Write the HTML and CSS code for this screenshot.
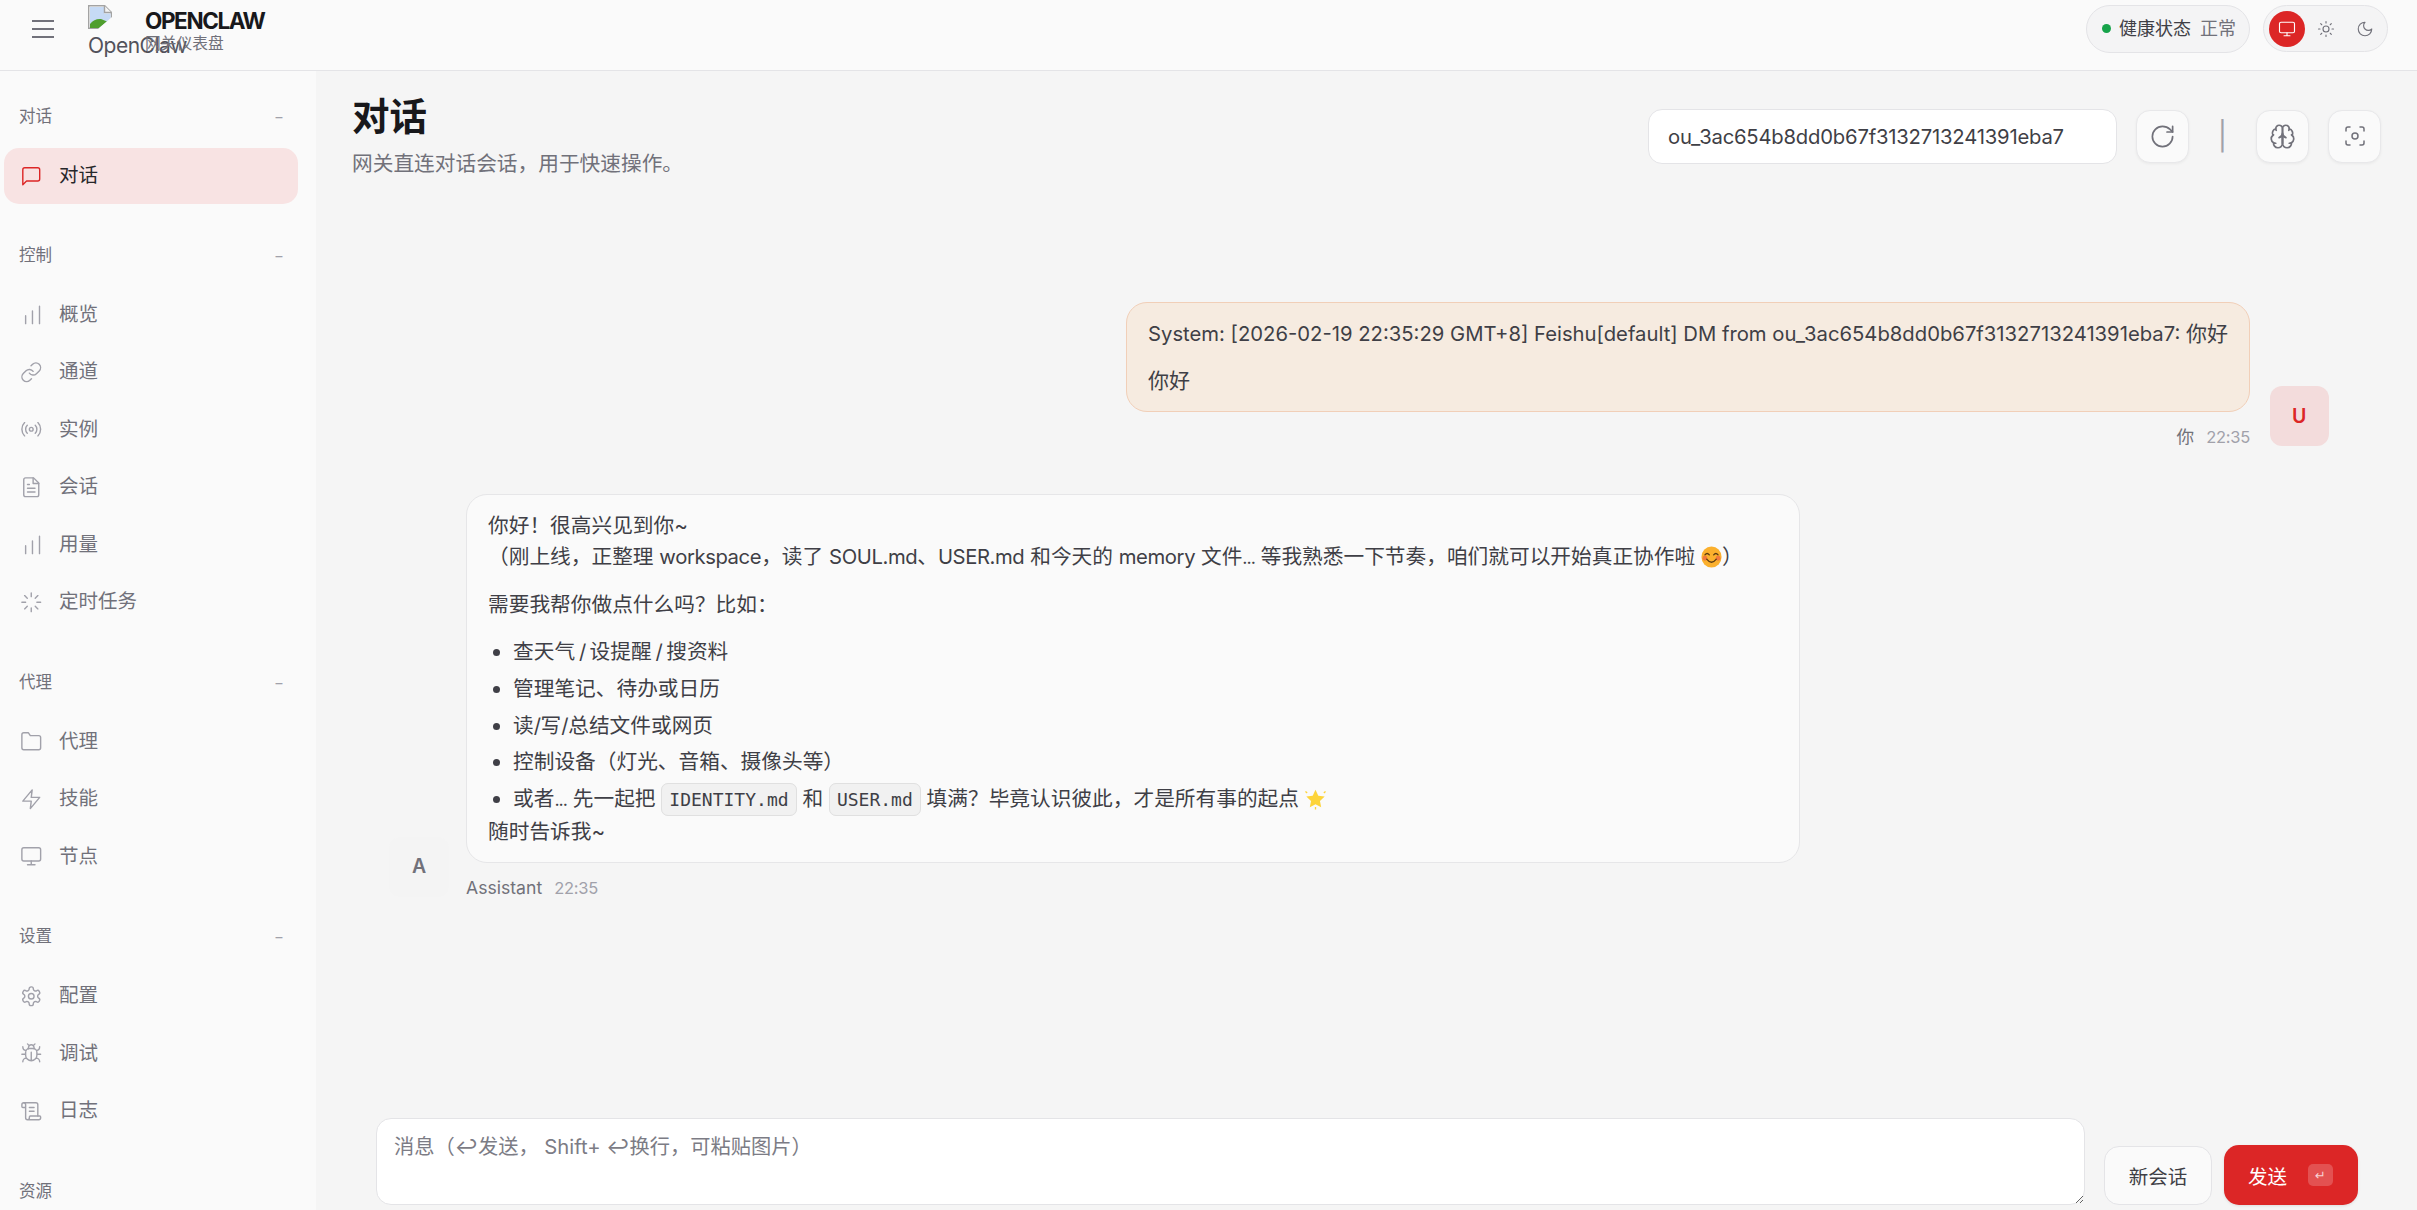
FILE: index.html
```html
<!DOCTYPE html>
<html lang="zh-CN">
<head>
<meta charset="utf-8">
<title>OpenClaw</title>
<link rel="stylesheet" href="styles.css">
</head>
<body>
<svg class="defs" width="0" height="0" aria-hidden="true">
  <symbol id="i-msg" viewBox="0 0 24 24"><path d="M21 15a2 2 0 0 1-2 2H7l-4 4V5a2 2 0 0 1 2-2h14a2 2 0 0 1 2 2z"/></symbol>
  <symbol id="i-bars" viewBox="0 0 24 24"><path d="M20.800 22V3.500M13.300 22V8.500M6 22v-8.500"/></symbol>
  <symbol id="i-link" viewBox="0 0 24 24"><path d="M10 13a5 5 0 0 0 7.54.54l3-3a5 5 0 0 0-7.07-7.07l-1.72 1.71"/><path d="M14 11a5 5 0 0 0-7.54-.54l-3 3a5 5 0 0 0 7.07 7.07l1.71-1.71"/></symbol>
  <symbol id="i-radio" viewBox="0 0 24 24"><circle cx="12" cy="12" r="2"/><path d="M16.24 7.76a6 6 0 0 1 0 8.49M7.76 16.24a6 6 0 0 1 0-8.49M19.07 4.93a10 10 0 0 1 0 14.14M4.93 19.07a10 10 0 0 1 0-14.14"/></symbol>
  <symbol id="i-file" viewBox="0 0 24 24"><path d="M14.5 2H6a2 2 0 0 0-2 2v16a2 2 0 0 0 2 2h12a2 2 0 0 0 2-2V7.5L14.5 2z"/><path d="M14 2v6h6M16 13H8M16 17H8M10 9H8"/></symbol>
  <symbol id="i-loader" viewBox="0 0 24 24"><path d="M12 2v4M12 18v4M4.93 4.93l2.83 2.83M16.24 16.24l2.83 2.83M2 12h4M18 12h4M4.93 19.07l2.83-2.83M16.24 7.76l2.83-2.83"/></symbol>
  <symbol id="i-folder" viewBox="0 0 24 24"><path d="M22 19a2 2 0 0 1-2 2H4a2 2 0 0 1-2-2V5a2 2 0 0 1 2-2h5l2 3h9a2 2 0 0 1 2 2z"/></symbol>
  <symbol id="i-zap" viewBox="0 0 24 24"><path d="M13 2 3 14h9l-1 8 10-12h-9l1-8z"/></symbol>
  <symbol id="i-monitor" viewBox="0 0 24 24"><rect x="2" y="3" width="20" height="14" rx="2"/><path d="M8 21h8M12 17v4"/></symbol>
  <symbol id="i-gear" viewBox="0 0 24 24"><path d="M12.22 2h-.44a2 2 0 0 0-2 2v.18a2 2 0 0 1-1 1.73l-.43.25a2 2 0 0 1-2 0l-.15-.08a2 2 0 0 0-2.73.73l-.22.38a2 2 0 0 0 .73 2.73l.15.1a2 2 0 0 1 1 1.72v.51a2 2 0 0 1-1 1.74l-.15.09a2 2 0 0 0-.73 2.73l.22.38a2 2 0 0 0 2.73.73l.15-.08a2 2 0 0 1 2 0l.43.25a2 2 0 0 1 1 1.73V20a2 2 0 0 0 2 2h.44a2 2 0 0 0 2-2v-.18a2 2 0 0 1 1-1.73l.43-.25a2 2 0 0 1 2 0l.15.08a2 2 0 0 0 2.73-.73l.22-.39a2 2 0 0 0-.73-2.73l-.15-.08a2 2 0 0 1-1-1.74v-.5a2 2 0 0 1 1-1.74l.15-.09a2 2 0 0 0 .73-2.73l-.22-.38a2 2 0 0 0-2.73-.73l-.15.08a2 2 0 0 1-2 0l-.43-.25a2 2 0 0 1-1-1.73V4a2 2 0 0 0-2-2z"/><circle cx="12" cy="12" r="3"/></symbol>
  <symbol id="i-bug" viewBox="0 0 24 24"><path d="m8 2 1.88 1.88M14.12 3.88 16 2M9 7.13v-1a3.003 3.003 0 1 1 6 0v1"/><path d="M12 20c-3.3 0-6-2.7-6-6v-3a4 4 0 0 1 4-4h4a4 4 0 0 1 4 4v3c0 3.3-2.7 6-6 6M12 20v-9M6.53 9C4.6 8.8 3 7.1 3 5M6 13H2M3 21c0-2.1 1.7-3.9 3.8-4M20.97 5c0 2.1-1.6 3.8-3.5 4M22 13h-4M17.2 17c2.1.1 3.8 1.9 3.8 4"/></symbol>
  <symbol id="i-scroll" viewBox="0 0 24 24"><path d="M15 12h-5M15 8h-5M19 17V5a2 2 0 0 0-2-2H4"/><path d="M8 21h12a2 2 0 0 0 2-2v-1a1 1 0 0 0-1-1H11a1 1 0 0 0-1 1v1a2 2 0 1 1-4 0V5a2 2 0 1 0-4 0v2a1 1 0 0 0 1 1h3"/></symbol>
  <symbol id="i-rotate" viewBox="0 0 24 24"><path d="M21 12a9 9 0 1 1-9-9c2.52 0 4.93 1 6.74 2.74L21 8"/><path d="M21 3v5h-5"/></symbol>
  <symbol id="i-brain" viewBox="0 0 24 24"><path d="M12 5a3 3 0 1 0-5.997.125 4 4 0 0 0-2.526 5.77 4 4 0 0 0 .556 6.588A4 4 0 1 0 12 18Z"/><path d="M12 5a3 3 0 1 1 5.997.125 4 4 0 0 1 2.526 5.77 4 4 0 0 1-.556 6.588A4 4 0 1 1 12 18Z"/><path d="M15 13a4.5 4.5 0 0 1-3-4 4.5 4.5 0 0 1-3 4M12 18V9M17.599 6.5a3 3 0 0 0 .399-1.375M6.003 5.125A3 3 0 0 0 6.401 6.5M3.477 10.896a4 4 0 0 1 .585-.396M19.938 10.5a4 4 0 0 1 .585.396M6 18a4 4 0 0 1-1.967-.516M19.967 17.484A4 4 0 0 1 18 18"/></symbol>
  <symbol id="i-scan" viewBox="0 0 24 24"><path d="M3 7V5a2 2 0 0 1 2-2h2M17 3h2a2 2 0 0 1 2 2v2M21 17v2a2 2 0 0 1-2 2h-2M7 21H5a2 2 0 0 1-2-2v-2"/><circle cx="12" cy="12" r="3"/></symbol>
  <symbol id="i-sun" viewBox="0 0 24 24"><circle cx="12" cy="12" r="4"/><path d="M12 2v2M12 20v2M4.93 4.93l1.41 1.41M17.66 17.66l1.41 1.41M2 12h2M20 12h2M6.34 17.66l-1.41 1.41M19.07 4.93l-1.41 1.41"/></symbol>
  <symbol id="i-moon" viewBox="0 0 24 24"><path d="M12 3a6 6 0 0 0 9 9 9 9 0 1 1-9-9Z"/></symbol>
</svg>

<header class="topbar">
  <button class="menu-btn" type="button" aria-label="menu">
    <svg class="menu-icon" viewBox="0 0 22 18"><path d="M0 1h22M0 9h22M0 17h22"/></svg>
  </button>
  <div class="logo">
    <svg class="broken" viewBox="0 0 24 24">
      <path d="M.7.7h16l6.600 6.600v16H.7z" fill="#fff" stroke="#a3a3a3" stroke-width="1.400"/>
      <path d="M2 2h14v6.500h6.500V22H2z" fill="#c6daf5"/>
      <path d="M2 23v-4c3-4 7-5.500 11-5l6 2.500-8 6.500z" fill="#4f9e2e"/>
      <path d="M10 24 24 12v12z" fill="#fafafa"/>
      <path d="M16.500.7v6.800h6.800" fill="#f4f4f4" stroke="#a3a3a3" stroke-width="1.400"/>
    </svg>
    <span class="logo-alt">OpenClaw</span>
  </div>
  <div class="brand">
    <div class="brand-title">OPENCLAW</div>
    <div class="brand-sub">网关仪表盘</div>
  </div>
  <div class="top-right">
    <div class="health">
      <span class="health-dot"></span>
      <span class="health-label">健康状态</span>
      <span class="health-value">正常</span>
    </div>
    <div class="theme">
      <span class="theme-opt theme-on"><svg class="ico"><use href="#i-monitor"/></svg></span>
      <span class="theme-opt"><svg class="ico"><use href="#i-sun"/></svg></span>
      <span class="theme-opt"><svg class="ico"><use href="#i-moon"/></svg></span>
    </div>
  </div>
</header>

<div class="shell">
  <nav class="sidebar">
    <section class="group">
      <div class="group-label"><span>对话</span><span class="minus">−</span></div>
      <a class="item item-on"><svg class="ico"><use href="#i-msg"/></svg><span>对话</span></a>
    </section>
    <section class="group">
      <div class="group-label"><span>控制</span><span class="minus">−</span></div>
      <a class="item"><svg class="ico"><use href="#i-bars"/></svg><span>概览</span></a>
      <a class="item"><svg class="ico"><use href="#i-link"/></svg><span>通道</span></a>
      <a class="item"><svg class="ico"><use href="#i-radio"/></svg><span>实例</span></a>
      <a class="item"><svg class="ico"><use href="#i-file"/></svg><span>会话</span></a>
      <a class="item"><svg class="ico"><use href="#i-bars"/></svg><span>用量</span></a>
      <a class="item"><svg class="ico"><use href="#i-loader"/></svg><span>定时任务</span></a>
    </section>
    <section class="group">
      <div class="group-label"><span>代理</span><span class="minus">−</span></div>
      <a class="item"><svg class="ico"><use href="#i-folder"/></svg><span>代理</span></a>
      <a class="item"><svg class="ico"><use href="#i-zap"/></svg><span>技能</span></a>
      <a class="item"><svg class="ico"><use href="#i-monitor"/></svg><span>节点</span></a>
    </section>
    <section class="group">
      <div class="group-label"><span>设置</span><span class="minus">−</span></div>
      <a class="item"><svg class="ico"><use href="#i-gear"/></svg><span>配置</span></a>
      <a class="item"><svg class="ico"><use href="#i-bug"/></svg><span>调试</span></a>
      <a class="item"><svg class="ico"><use href="#i-scroll"/></svg><span>日志</span></a>
    </section>
    <section class="group">
      <div class="group-label"><span>资源</span></div>
    </section>
  </nav>

  <main class="main">
    <div class="page-head">
      <div>
        <h1 class="page-title">对话</h1>
        <p class="page-sub">网关直连对话会话，用于快速操作。</p>
      </div>
      <div class="controls">
        <input class="session" type="text" value="ou_3ac654b8dd0b67f3132713241391eba7">
        <button class="tool" type="button"><svg class="ico ico-lg"><use href="#i-rotate"/></svg></button>
        <span class="sep">|</span>
        <button class="tool" type="button"><svg class="ico ico-lg"><use href="#i-brain"/></svg></button>
        <button class="tool" type="button"><svg class="ico ico-md"><use href="#i-scan"/></svg></button>
      </div>
    </div>

    <div class="thread">
      <div class="msg msg-user">
        <div class="msg-body">
          <div class="bubble bubble-user">
            <p>System: [2026-02-19 22:35:29 GMT+8] Feishu[default] DM from ou_3ac654b8dd0b67f3132713241391eba7: <span class="cjk">你好</span></p>
            <p><span class="cjk">你好</span></p>
          </div>
          <div class="meta meta-user"><span class="who">你</span><span class="time">22:35</span></div>
        </div>
        <div class="avatar avatar-user">U</div>
      </div>

      <div class="msg msg-bot">
        <div class="avatar avatar-bot">A</div>
        <div class="msg-body">
          <div class="bubble bubble-bot">
            <p>你好！很高兴见到你~<br>（刚上线，正整理 <span class="lat">workspace</span>，读了 <span class="lat">SOUL.md</span>、<span class="lat">USER.md</span> 和今天的 <span class="lat">memory</span> 文件<span class="dots">...</span> 等我熟悉一下节奏，咱们就可以开始真正协作啦 <svg class="emoji" viewBox="0 0 24 24"><ellipse cx="12" cy="12" rx="11.500" ry="12" fill="#fbb02d"/><circle cx="4.500" cy="13.500" r="2.800" fill="#f2793c"/><circle cx="19.500" cy="13.500" r="2.800" fill="#f2793c"/><path d="M4.500 9.500q2.500-3 5 0M14.500 9.500q2.500-3 5 0M6.500 14.500q5.500 7 11 0" fill="none" stroke="#5b3a12" stroke-width="1.500" stroke-linecap="round"/></svg>）</p>
            <p>需要我帮你做点什么吗？比如：</p>
            <ul>
              <li class="tight">查天气 <span class="lat">/</span> 设提醒 <span class="lat">/</span> 搜资料</li>
              <li>管理笔记、待办或日历</li>
              <li>读<span class="lat">/</span>写<span class="lat">/</span>总结文件或网页</li>
              <li>控制设备（灯光、音箱、摄像头等）</li>
              <li>或者<span class="dots">...</span> 先一起把 <code>IDENTITY.md</code> 和 <code>USER.md</code> 填满？毕竟认识彼此，才是所有事的起点 <svg class="emoji" viewBox="0 0 24 24"><path d="M12 1.500l3.200 6.800 7.300.9-5.400 5 1.400 7.300L12 18l-6.500 3.500 1.400-7.300-5.400-5 7.300-.9z" fill="#fdd43a"/><path d="M12 21v3M.5 3.500l2 1.500M23.500 3.500l-2 1.500" stroke="#fdd43a" stroke-width="1.500"/></svg></li>
            </ul>
            随时告诉我~
          </div>
          <div class="meta"><span class="who">Assistant</span><span class="time">22:35</span></div>
        </div>
      </div>
    </div>

    <div class="composer">
      <textarea class="input" placeholder="消息（↩发送， Shift+ ↩换行，可粘贴图片）"></textarea>
      <div class="actions">
        <button class="btn-new" type="button">新会话</button>
        <button class="btn-send" type="button">发送<kbd class="kbd">↵</kbd></button>
      </div>
    </div>
  </main>
</div>
</body>
</html>
```

FILE: styles.css
```css
* { box-sizing: border-box; }
html, body { height: 100%; }
body {
  margin: 0;
  overflow: hidden;
  display: flex;
  flex-direction: column;
  background: #f5f5f5;
  color: #3f3f46;
  font-family: Inter, "Noto Sans CJK SC", sans-serif;
  font-size: 21px;
  line-height: 31.5px;
}
.defs { position: absolute; }
button, input, textarea { font-family: inherit; }

.ico {
  width: 22.5px;
  height: 22.5px;
  flex: none;
  fill: none;
  stroke: currentColor;
  stroke-width: 1.5;
  stroke-linecap: round;
  stroke-linejoin: round;
}
.ico-lg { width: 27px; height: 27px; }
.ico-md { width: 24px; height: 24px; }

.topbar {
  flex: none;
  height: 71px;
  display: flex;
  align-items: center;
  padding: 0 29px 13px 32px;
  background: #fafafa;
  border-bottom: 1px solid #e4e4e7;
}
.menu-btn {
  width: 22px;
  height: 18px;
  padding: 0;
  border: 0;
  background: none;
  margin-right: 34px;
}
.menu-icon { display: block; width: 22px; height: 18px; fill: none; stroke: #71717a; stroke-width: 2; }
.logo {
  width: 45px;
  height: 56px;
  margin-top: 8px;
  margin-right: 12px;
  white-space: nowrap;
  color: #52525b;
}
.broken { display: block; width: 24px; height: 24px; }
.logo-alt { display: block; line-height: 34px; font-size: 21px; letter-spacing: -.5px; }
.brand { display: flex; flex-direction: column; margin-top: 3px; }
.brand-title { font-size: 22.5px; line-height: 27px; font-weight: 700; color: #18181b; letter-spacing: -1.4px; }
.brand-sub { font-size: 15.75px; line-height: 20px; color: #71717a; }
.top-right { margin-left: auto; display: flex; align-items: center; gap: 13px; }
.health {
  height: 48px;
  display: flex;
  align-items: center;
  padding: 0 13px 0 15px;
  background: #f4f4f5;
  border: 1px solid #e4e4e7;
  border-radius: 24px;
  font-size: 18px;
}
.health-dot { width: 9px; height: 9px; border-radius: 50%; background: #16a34a; margin-right: 8px; }
.health-label { color: #3f3f46; margin-right: 9px; }
.health-value { color: #71717a; }
.theme {
  height: 47px;
  display: flex;
  align-items: center;
  gap: 3px;
  padding: 0 4px 0 5px;
  background: #f4f4f5;
  border: 1px solid #e4e4e7;
  border-radius: 24px;
}
.theme-opt { width: 36px; height: 36px; display: flex; align-items: center; justify-content: center; border-radius: 50%; color: #71717a; }
.theme-opt .ico { width: 18px; height: 18px; }
.theme-on { background: #dc2626; color: #fff; }

.shell { flex: 1; min-height: 0; display: flex; }
.sidebar {
  flex: none;
  width: 316px;
  padding: 31px 18px 0 4px;
  background: #fafafa;
  overflow: hidden;
}
.group { margin-bottom: 37.5px; display: flex; flex-direction: column; gap: 1.5px; }
.group:first-child { margin-bottom: 36.5px; }
.group-label {
  height: 30px;
  margin-bottom: 14.5px;
  padding: 0 14px 0 15px;
  display: flex;
  align-items: center;
  justify-content: space-between;
  font-size: 16.5px;
  color: #71717a;
}
.minus { color: #a1a1aa; font-size: 15px; }
.item {
  height: 56px;
  display: flex;
  align-items: center;
  gap: 17px;
  padding-left: 15.5px;
  border-radius: 15px;
  font-size: 19.5px;
  color: #71717a;
}
.item .ico { color: #a1a1aa; }
.item-on { background: #f8e3e3; color: #27272a; }
.item-on .ico { color: #dc2626; }

.main { flex: 1; min-width: 0; display: flex; flex-direction: column; padding: 0 36px; }
.page-head { display: flex; align-items: center; justify-content: space-between; padding-top: 22.5px; }
.page-title { margin: 0; font-size: 37.5px; line-height: 45px; font-weight: 700; color: #18181b; }
.page-sub { margin: 9px 0 0; font-size: 20.7px; line-height: 31.5px; color: #71717a; }
.controls { display: flex; align-items: center; gap: 19px; }
.session {
  width: 469px;
  height: 55px;
  padding: 0 19px;
  background: #fff;
  border: 1px solid #e4e4e7;
  border-radius: 14px;
  font-size: 20.25px;
  letter-spacing: -.2px;
  color: #3f3f46;
  outline: none;
}
.tool {
  width: 53px;
  height: 53px;
  padding: 0;
  display: flex;
  align-items: center;
  justify-content: center;
  background: #fafafa;
  border: 1px solid #e8e8ea;
  border-radius: 14px;
  color: #71717a;
  box-shadow: 0 1px 3px rgba(0,0,0,.05);
}
.sep { width: 15px; margin: 0 7px; text-align: center; font-size: 28px; color: #a1a1aa; }

.thread { flex: 1; min-height: 0; padding: 123px 52px 0 37px; display: flex; flex-direction: column; gap: 47.5px; }
.msg { display: flex; align-items: flex-end; gap: 17px; }
.msg-user { justify-content: flex-end; gap: 19.5px; }
.avatar {
  flex: none;
  width: 60px;
  height: 60px;
  display: flex;
  align-items: center;
  justify-content: center;
  border-radius: 12px;
  font-size: 19.5px;
  font-weight: 600;
}
.avatar-user { width: 59.5px; background: #f3dcdc; color: #dc2626; }
.avatar-bot { background: #f4f4f4; color: #71717a; }
.msg-body { min-width: 0; display: flex; flex-direction: column; }
.msg-user .msg-body { align-items: flex-end; }
.bubble { padding: 15px 21px; border-radius: 21px; border: 1px solid #e6e6e8; }
.bubble p { margin: 0 0 15.4px; }
.bubble p:last-child { margin-bottom: 0; }
.bubble-user { background: #f6ebe0; border-color: #f1cfb8; font-size: 20.25px; }
.cjk { font-size: 21px; }
.bubble-bot { width: 1334px; background: #fafafa; font-size: 20.7px; }
.lat { font-size: 20.25px; letter-spacing: -.4px; }
.dots { font-size: 18px; letter-spacing: -1px; }
.tight { word-spacing: -2px; }
.bubble ul { margin: 0; padding-left: 25px; }
.bubble li + li { margin-top: 5.25px; }
code {
  font-family: "DejaVu Sans Mono", monospace;
  font-size: 18px;
  padding: 5px 7px;
  background: #f1f1f1;
  border: 1px solid #e0e0e0;
  border-radius: 7px;
}
.emoji { width: 21px; height: 22px; vertical-align: -4px; }
.meta { height: 18px; margin-top: 16px; display: flex; align-items: center; gap: 12px; font-size: 17.6px; line-height: 18px; }
.who { color: #71717a; }
.time { color: #a1a1aa; font-size: 16.5px; letter-spacing: -.25px; }

.composer { flex: none; display: flex; align-items: flex-end; gap: 19px; padding: 0 23px 5px 24px; }
.input {
  flex: 1;
  height: 87px;
  padding: 13px 17px;
  background: #fff;
  border: 1px solid #e4e4e7;
  border-radius: 15px;
  font-size: 20.25px;
  line-height: 30px;
  color: #3f3f46;
  outline: none;
  display: block;
}
.input::placeholder { color: #7c7c85; opacity: 1; }
.actions { display: flex; align-items: flex-end; gap: 12px; }
.btn-new {
  width: 108px;
  height: 59px;
  padding: 0;
  background: #fafafa;
  border: 1px solid #e4e4e7;
  border-radius: 15px;
  font-size: 19.5px;
  color: #3f3f46;
}
.btn-send {
  width: 134px;
  height: 60px;
  padding: 0 25px 0 24px;
  display: flex;
  align-items: center;
  justify-content: space-between;
  background: #dc2626;
  border: 0;
  border-radius: 15px;
  font-size: 19.5px;
  color: #fff;
  box-shadow: 0 1px 3px rgba(0,0,0,.1);
}
.kbd {
  width: 25px;
  height: 22px;
  display: flex;
  align-items: center;
  justify-content: center;
  background: rgba(255,255,255,.2);
  border-radius: 5px;
  font-family: "DejaVu Sans", sans-serif;
  font-size: 13px;
  color: rgba(255,255,255,.75);
}
```
